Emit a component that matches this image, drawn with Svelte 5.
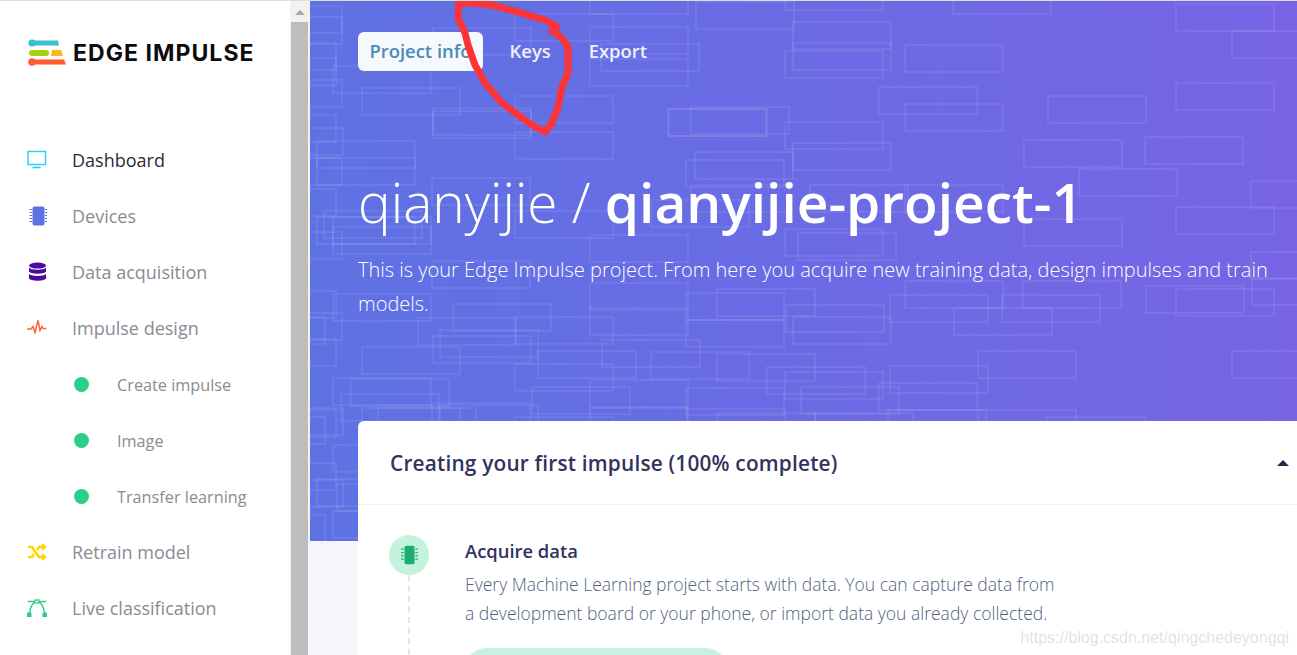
<script lang="ts">
  // background boxes in the hero, page coordinates
  const boxes = [
    [696,2],[785,-17],[953,-13],[1176,4],[1232,31],[793,22],[793,43],[785,51],[905,45],[879,87],[905,104],[1048,96],
    [1176,83],[691,107],[669,109],[785,122],[793,143],[1024,140],[1145,137],[695,152],[686,160],[1079,169],[691,185],
    [810,185],[905,185],[1251,181],[1176,207],[1024,219],[785,229],[798,233],[1251,252],[590,-13],[590,27],[601,44],
    [590,59],[651,200],[590,235],[515,14],[515,96],[515,132],[433,108],[433,111],[362,88],[333,66],[433,28],[668,109],
    [317,141],[317,158],[244,6],[244,17],[244,80],[238,43],[238,58],[238,115],[245,128],[244,158],[238,189],[324,211],
    [333,217],[317,217],[333,227],[244,232],[432,178],[515,211],[432,261],[590,283],[686,293],[717,289],[686,320],
    [590,308],[333,294],[238,291],[418,318],[453,304],[515,317],[440,330],[433,336],[515,364],[538,351],[602,340],
    [651,352],[717,354],[362,347],[767,367],[786,305],[793,317],[785,372],[333,378],[351,379],[341,394],[532,387],
    [590,380],[686,388],[378,408],[362,408],[432,403],[440,405],[590,408],[687,409],[717,413],[515,417],[245,408],
    [238,410],[227,417],[333,445],[238,463],[317,479],[337,484],[333,511],[245,480],[227,515],[227,317],[244,313],
    [238,339],[905,281],[1023,281],[890,295],[1002,295],[954,308],[1146,286],[1176,289],[978,351],
    [1232,351],[890,366],[879,383],[801,387],[978,410],[1047,417],[888,410],[815,413],[1252,278]
  ];

  const scribble =
    'M459 0 L458 18 L465 33 L468 45 L475 65 L485 83 L502 103 L518 115 L532 125 L545 132 L552 123 L558 107 L562 87 L568 73 L568 47 L562 38 L552 31 L557 27 L545 20 L518 12 L492 5 L472 3 L460 3';
</script>

<div class="page">
  <aside class="sidebar">
    <div class="logo">
      <svg width="40" height="28" viewBox="0 0 40 28">
        <circle cx="4" cy="4" r="3.6" fill="#3bbecd" />
        <path d="M4 1.5H30L31 6.5H4Z" fill="#3bbecd" />
        <rect x="1" y="11" width="20" height="6" rx="3" fill="#a5d20a" />
        <path d="M24 11H33L35 17H23Z" fill="#fdb813" />
        <circle cx="4" cy="23" r="3.8" fill="#ff5a30" />
        <path d="M4 20.5H36L38 25.5H4Z" fill="#ff5a30" />
      </svg>
      <span>EDGE IMPULSE</span>
    </div>
    <nav>
      <a class="row active">
        <svg class="ico" viewBox="0 0 20 20" width="20" height="20" fill="none" stroke="#1dd2f5">
          <rect x="1" y="1.5" width="17.5" height="13" stroke-width="1.4" />
          <path d="M5.5 17.5h8" stroke-width="1.6" />
        </svg>
        Dashboard
      </a>
      <a class="row">
        <svg class="ico" viewBox="0 0 20 20" width="20" height="20">
          <rect x="5.500" y="0.500" width="12" height="19" rx="1.800" fill="#5e72e4" />
          <path d="M2.500 3.500h2.500M2.500 6.500h2.500M2.500 9.500h2.500M2.500 12.500h2.500M2.500 15.500h2.500M18 3.500h2M18 6.500h2M18 9.500h2M18 12.500h2M18 15.500h2" stroke="#5e72e4" stroke-width="1" />
        </svg>
        Devices
      </a>
      <a class="row">
        <svg class="ico" viewBox="0 0 20 20" width="20" height="20" fill="#4b0a9f">
          <ellipse cx="10.5" cy="3.6" rx="8.5" ry="3" />
          <path d="M2 5.8c2 2.6 15 2.6 17 0v4c-2 2.6-15 2.6-17 0Z" />
          <path d="M2 12c2 2.6 15 2.6 17 0v4.400c-2 3-15 3-17 0Z" />
        </svg>
        Data acquisition
      </a>
      <a class="row">
        <svg class="ico" viewBox="0 0 20 20" width="20" height="20" fill="none" stroke="#fb6340" stroke-width="1.500">
          <path d="M0 11h4l2-2.500 2 6 3-12 2 10 2-4 1 2h3.500" />
        </svg>
        Impulse design
      </a>
      <a class="row sub"><i class="dot"></i>Create impulse</a>
      <a class="row sub"><i class="dot"></i>Image</a>
      <a class="row sub"><i class="dot"></i>Transfer learning</a>
      <a class="row">
        <svg class="ico" viewBox="0 0 20 20" width="20" height="20" fill="none" stroke="#ffd600" stroke-width="2.600">
          <path d="M1 5h4l7 10h3M1 15h4l2-3M10 8l2-3h3" />
          <path d="M15 1l5 4-5 4ZM15 11l5 4-5 4Z" fill="#ffd600" stroke="none" />
        </svg>
        Retrain model
      </a>
      <a class="row">
        <svg class="ico" viewBox="0 0 20 20" width="20" height="20" fill="none" stroke="#2dce89" stroke-width="1.300">
          <path d="M2.500 15C3.500 7 7 3.500 10 3.500S16.500 7 17.500 15M1 3.500h18" />
          <rect x="0" y="14.500" width="4.500" height="4.500" fill="#2dce89" stroke="none" />
          <rect x="15.500" y="14.500" width="4.500" height="4.500" fill="#2dce89" stroke="none" />
          <rect x="8" y="2" width="4" height="3" fill="#fff" />
        </svg>
        Live classification
      </a>
    </nav>
  </aside>

  <div class="scrollbar">
    <div class="arrow"></div>
    <div class="thumb"></div>
  </div>

  <main>
    <section class="hero">
      <svg class="pattern" viewBox="310 1 987 540" width="987" height="540">
        {#each boxes as [x, y]}
          <rect {x} {y} width="98" height="27" />
        {/each}
      </svg>
      <div class="tabs">
        <span class="tab on">Project info</span>
        <span class="tab">Keys</span>
        <span class="tab">Export</span>
      </div>
      <h1>qianyijie / <strong>qianyijie-project-1</strong></h1>
      <p class="lead">This is your Edge Impulse project. From here you acquire new training data, design impulses and train models.</p>
    </section>

    <section class="card">
      <header>
        <h2>Creating your first impulse (100% complete)</h2>
        <i class="caret"></i>
      </header>
      <div class="step">
        <div class="rail">
          <div class="badge">
            <svg viewBox="0 0 20 24" width="17" height="20">
              <rect x="4" y="1" width="12" height="22" rx="2" fill="#1aae6f" />
              <path d="M0 5h3M0 9h3M0 13h3M0 17h3M17 5h3M17 9h3M17 13h3M17 17h3" stroke="#1aae6f" stroke-width="1.500" />
            </svg>
          </div>
          <div class="dash"></div>
        </div>
        <div class="text">
          <h3>Acquire data</h3>
          <p>Every Machine Learning project starts with data. You can capture data from a development board or your phone, or import data you already collected.</p>
          <div class="btn"></div>
        </div>
      </div>
    </section>
  </main>

  <svg class="ink" width="1297" height="655" viewBox="0 0 1297 655">
    <path d={scribble} fill="none" stroke="#fb3438" stroke-width="7" stroke-linejoin="round" stroke-linecap="round" />
  </svg>
  <div class="mark">https://blog.csdn.net/qingchedeyongqi</div>
</div>

<style>
  :global(body) {
    margin: 0;
    overflow: hidden;
    background: #fff;
  }

  .page {
    position: relative;
    display: flex;
    height: 654px;
    border-top: 1px solid #dcdde0;
    overflow: hidden;
    font-family: 'Open Sans', 'Liberation Sans', sans-serif;
  }

  .sidebar {
    flex: 0 0 290px;
    background: #fff;
  }
  .logo {
    display: flex;
    align-items: center;
    gap: 5px;
    height: 26px;
    margin: 39px 0 0 28px;
  }
  .logo span {
    font-family: Inter, 'Liberation Sans', sans-serif;
    font-weight: 700;
    font-size: 23px;
    letter-spacing: 1.05px;
    color: #0c0c10;
    white-space: nowrap;
  }
  nav {
    margin-top: 66px;
  }
  .row {
    display: flex;
    align-items: center;
    box-sizing: border-box;
    height: 56px;
    padding-left: 27px;
    font-size: 18px;
    color: #8c8a94;
  }
  .row.active {
    color: #2b2b3c;
  }
  .ico {
    flex: none;
    margin-right: 25px;
  }
  .sub {
    padding-left: 74px;
    padding-top: 1px;
    font-size: 16.25px;
  }
  .dot {
    flex: none;
    width: 15px;
    height: 15px;
    margin-right: 28px;
    border-radius: 50%;
    background: #2dce89;
  }

  .scrollbar {
    flex: 0 0 20px;
    display: flex;
    flex-direction: column;
    padding-left: 1px;
    box-sizing: border-box;
    background: #f4f4f6;
  }
  .arrow {
    position: relative;
    height: 21px;
    width: 17px;
    background: #f1f1f1;
  }
  .arrow::after {
    content: '';
    position: absolute;
    left: 4px;
    top: 9px;
    border: 5px solid transparent;
    border-top: 0;
    border-bottom: 5px solid #a8a8a8;
  }
  .thumb {
    flex: 1;
    width: 17px;
    background: #bdbdbd;
  }

  main {
    flex: 1;
    min-width: 0;
    background: #f5f6fc;
    overflow: hidden;
  }
  .hero {
    position: relative;
    height: 540px;
    padding: 31px 0 0 48px;
    box-sizing: border-box;
    background: linear-gradient(87deg, #5e72e4 0, #7764e4 100%);
    color: #fff;
  }
  .pattern {
    position: absolute;
    inset: 0;
  }
  .pattern rect {
    fill: none;
    stroke: rgba(255, 255, 255, 0.1);
    stroke-width: 1.5;
  }
  .tabs {
    position: relative;
    display: flex;
    gap: 15px;
  }
  .tab {
    padding: 0 11.5px;
    height: 39px;
    line-height: 37px;
    border-radius: 6px;
    font-size: 18.4px;
    font-weight: 600;
    color: #eef0fb;
  }
  .tab.on {
    background: #f6f9fc;
    color: #4a8bb5;
  }
  h1 {
    position: relative;
    margin: 93px 0 0;
    font-size: 55px;
    line-height: 76px;
    font-weight: 300;
    white-space: nowrap;
  }
  h1 strong {
    font-weight: 600;
  }
  .lead {
    position: relative;
    margin: 13px 0 0;
    max-width: 920px;
    font-size: 20px;
    font-weight: 300;
    line-height: 34px;
  }

  .card {
    position: relative;
    margin: -120px -20px 0 48px;
    background: #fff;
    border-radius: 6px;
  }
  .card header {
    display: flex;
    align-items: center;
    justify-content: space-between;
    height: 83px;
    padding: 0 28px 0 32px;
    border-bottom: 1px solid #eef0f3;
  }
  h2 {
    margin: 0;
    font-size: 20.8px;
    font-weight: 600;
    letter-spacing: 0.2px;
    color: #32325d;
  }
  .caret {
    border: 6px solid transparent;
    border-top: 0;
    border-bottom: 6px solid #172b4d;
  }
  .step {
    display: flex;
    padding: 30px 0 0 31px;
  }
  .rail {
    flex: none;
    display: flex;
    flex-direction: column;
    align-items: center;
    width: 40px;
    margin-right: 36px;
  }
  .badge {
    display: flex;
    align-items: center;
    justify-content: center;
    width: 40px;
    height: 40px;
    border-radius: 50%;
    background: #c3f3dd;
  }
  .dash {
    height: 90px;
    border-left: 2px dashed #e3e5ea;
  }
  .text h3 {
    margin: 0 0 3px;
    font-size: 18.4px;
    font-weight: 600;
    line-height: 32px;
    color: #32325d;
  }
  .text p {
    margin: 0;
    width: 595px;
    font-size: 17.5px;
    font-weight: 300;
    line-height: 29px;
    color: #525f7f;
  }
  .btn {
    width: 260px;
    height: 40px;
    margin: 20px 0 0 1px;
    border-radius: 20px;
    background: #c6f3df;
  }

  .ink {
    position: absolute;
    top: -1px;
    left: 0;
    pointer-events: none;
  }
  .mark {
    position: absolute;
    right: 8px;
    bottom: 8px;
    font-family: 'Liberation Sans', sans-serif;
    font-size: 16px;
    color: rgba(170, 170, 170, 0.35);
  }
</style>
